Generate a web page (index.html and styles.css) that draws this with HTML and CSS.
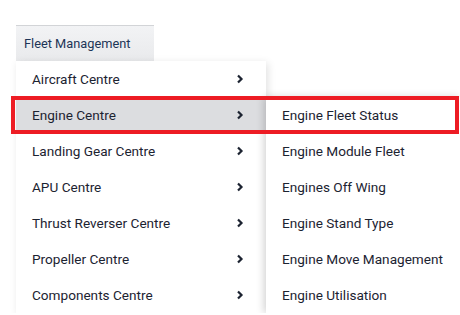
FILE: index.html
```html
<!DOCTYPE html>
<html lang="en">
<head>
    <meta charset="UTF-8">
    <meta name="viewport" content="width=device-width, initial-scale=1.0">
    <title>Fleet Management Menu</title>
    <link rel="stylesheet" href="styles.css">
</head>
<body>
    <div class="navbar">
        <!-- Top level button -->
        <div class="nav-button">Fleet Management</div>

        <!-- Dropdown menu -->
        <div class="menu-wrap">
            <ul class="menu">
                <li><span>Aircraft Centre</span><svg class="chev" viewBox="0 0 8 10"><path d="M2 1.5 L5.5 5 L2 8.5"/></svg></li>
                <li class="active"><span>Engine Centre</span><svg class="chev" viewBox="0 0 8 10"><path d="M2 1.5 L5.5 5 L2 8.5"/></svg></li>
                <li><span>Landing Gear Centre</span><svg class="chev" viewBox="0 0 8 10"><path d="M2 1.5 L5.5 5 L2 8.5"/></svg></li>
                <li><span>APU Centre</span><svg class="chev" viewBox="0 0 8 10"><path d="M2 1.5 L5.5 5 L2 8.5"/></svg></li>
                <li><span>Thrust Reverser Centre</span><svg class="chev" viewBox="0 0 8 10"><path d="M2 1.5 L5.5 5 L2 8.5"/></svg></li>
                <li><span>Propeller Centre</span><svg class="chev" viewBox="0 0 8 10"><path d="M2 1.5 L5.5 5 L2 8.5"/></svg></li>
                <li><span>Components Centre</span><svg class="chev" viewBox="0 0 8 10"><path d="M2 1.5 L5.5 5 L2 8.5"/></svg></li>
            </ul>

            <!-- Sub menu for Engine Centre -->
            <ul class="submenu">
                <li>Engine Fleet Status</li>
                <li>Engine Module Fleet</li>
                <li>Engines Off Wing</li>
                <li>Engine Stand Type</li>
                <li>Engine Move Management</li>
                <li>Engine Utilisation</li>
            </ul>

            <!-- Red highlight box -->
            <div class="highlight"></div>
        </div>
    </div>
</body>
</html>
```

FILE: styles.css
```css
/* CSS styles */
body {
    font-family: 'Roboto', 'Liberation Sans', sans-serif;
    background-color: #fff;
    margin: 0;
    padding: 0;
}

.navbar {
    padding: 25px 0 0 16px;
}

.nav-button {
    width: 138px;
    height: 36px;
    box-sizing: border-box;
    border-top: 1px solid #d2d4d7;
    background: linear-gradient(#f2f3f5, #e9eaec);
    color: #1d3557;
    font-size: 12.8px;
    line-height: 35px;
    padding-left: 8px;
}

.menu-wrap {
    position: relative;
}

.menu {
    list-style-type: none;
    margin: 0;
    padding: 0;
    width: 250px;
    background-color: #fff;
    box-shadow: 2px 2px 8px rgba(0, 0, 0, 0.12);
}

.menu li,
.submenu li {
    height: 36px;
    display: flex;
    align-items: center;
    justify-content: space-between;
    padding: 0 22px 0 16px;
    font-size: 13.6px;
    color: #1c2331;
    white-space: nowrap;
}

.submenu li {
    padding-right: 0;
}

.menu li.active {
    background-color: #dcdde0;
}

.chev {
    width: 8px;
    height: 10px;
    fill: none;
    stroke: #1c2331;
    stroke-width: 2.2;
}

.submenu {
    list-style-type: none;
    margin: 0;
    padding: 0;
    position: absolute;
    left: 250px;
    top: 36px;
    width: 194px;
    background-color: #fff;
    box-shadow: -2px 0 8px rgba(0, 0, 0, 0.18);
}

.highlight {
    position: absolute;
    left: -5px;
    top: 35px;
    width: 448px;
    height: 38px;
    box-sizing: border-box;
    border: 4px solid #ed1c24;
}
```
